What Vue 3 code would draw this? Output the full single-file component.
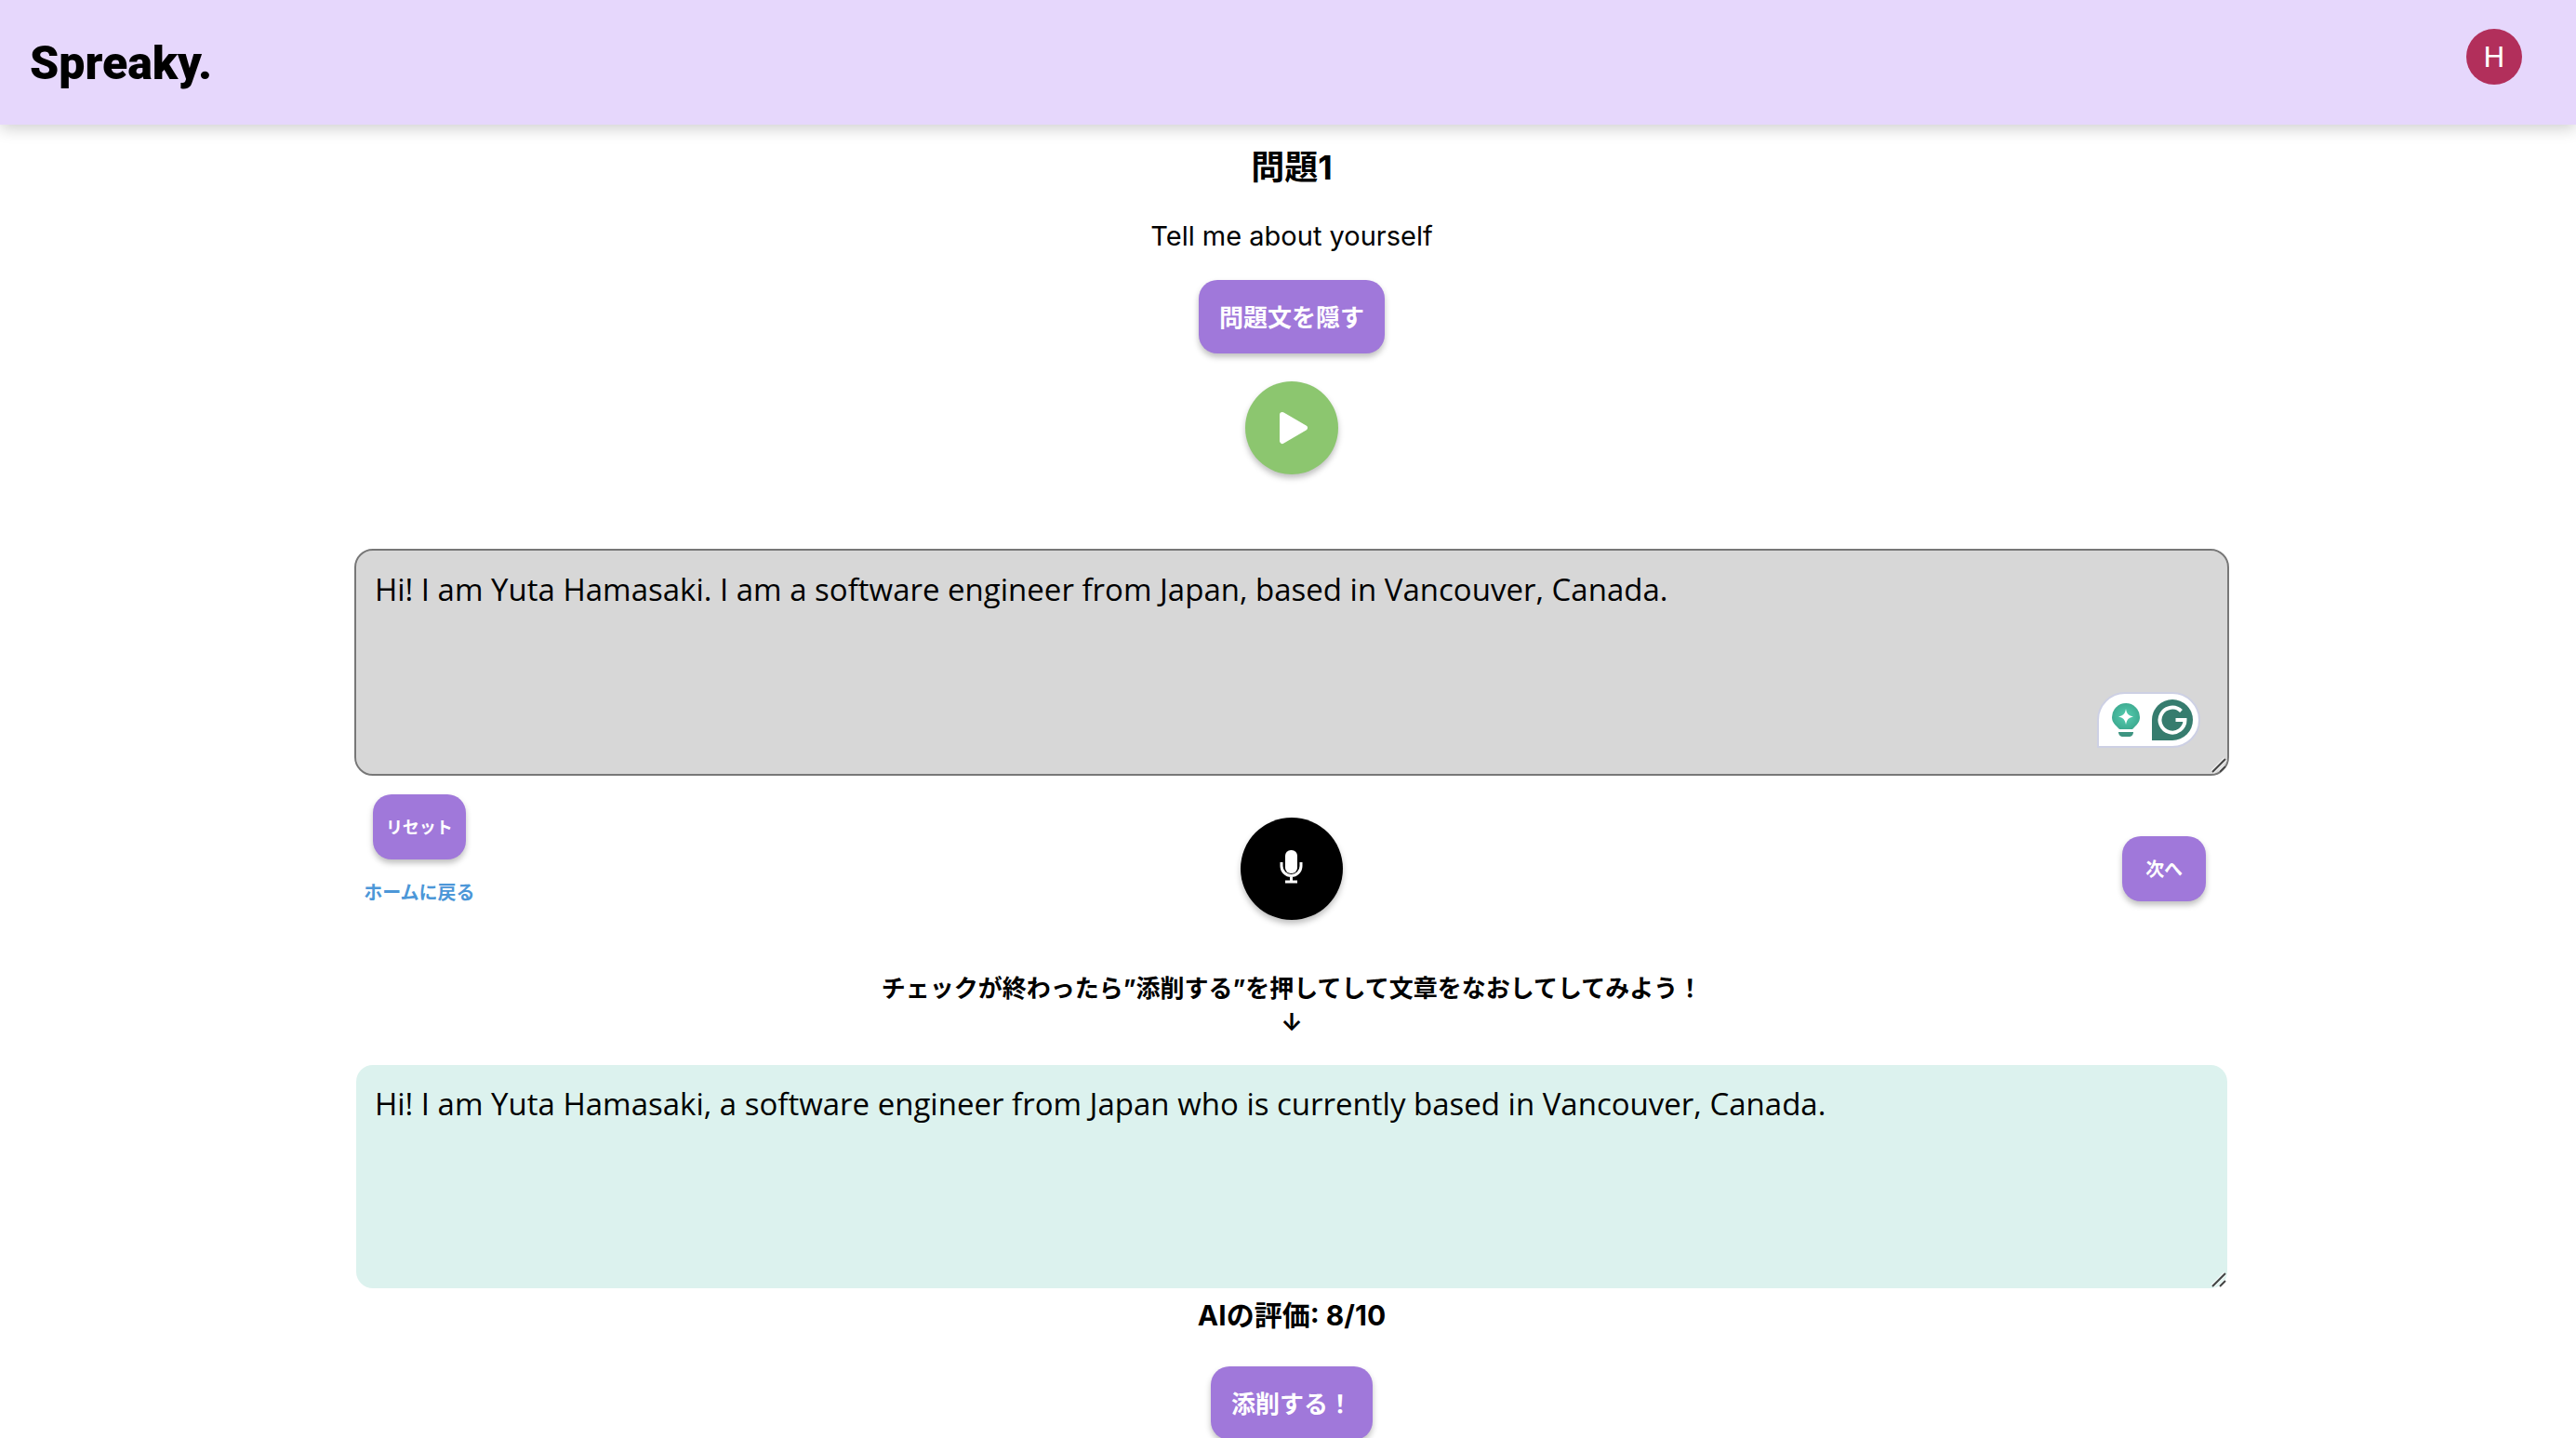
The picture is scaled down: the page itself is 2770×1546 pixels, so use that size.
<script setup>
import { ref } from 'vue'

const questionVisible = ref(true)
const answer = ref('Hi! I am Yuta Hamasaki. I am a software engineer from Japan, based in Vancouver, Canada.')
const corrected = ref('Hi! I am Yuta Hamasaki, a software engineer from Japan who is currently based in Vancouver, Canada.')

function reset() {
  answer.value = ''
}
</script>

<template>
  <div class="page">
    <header class="header">
      <a class="logo" href="#">Spreaky.</a>
      <button class="avatar" type="button">H</button>
    </header>

    <main class="main">
      <h1 class="title">問題1</h1>
      <p v-if="questionVisible" class="question">Tell me about yourself</p>
      <button class="btn" type="button" @click="questionVisible = !questionVisible">問題文を隠す</button>
      <button class="round play" type="button" aria-label="再生">
        <svg width="36" height="36" viewBox="0 0 36 36">
          <path d="M8 4L32 18L8 32Z" fill="#fff" stroke="#fff" stroke-width="6" stroke-linejoin="round" />
        </svg>
      </button>

      <div class="field">
        <textarea v-model="answer" class="area answer" aria-label="回答" spellcheck="false"></textarea>
        <div class="assistant">
          <svg width="32" height="38" viewBox="0 0 32 38">
            <defs>
              <radialGradient id="bulb">
                <stop offset="0" stop-color="#56cdb0" />
                <stop offset="1" stop-color="#3fac92" />
              </radialGradient>
            </defs>
            <path d="M16 1a15 15 0 0 1 15 15c0 5-3 8-6 11l-2 2H9l-2-2c-3-3-6-6-6-11A15 15 0 0 1 16 1z" fill="url(#bulb)" />
            <path d="M8 32h16c0 3-2 5-5 5h-6c-3 0-5-2-5-5z" fill="#3d9481" />
            <path d="M16 7c1 6 3 7 8 8.500c-5 1-7 3-8 8.500c-1-5.500-3-7.500-8-8.500c5-1.500 7-2.500 8-8.500z" fill="#fff" />
          </svg>
          <svg width="44" height="44" viewBox="0 0 44 44">
            <path d="M0 44V22a22 22 0 1 1 22 22z" fill="#367c6e" />
            <path d="M31.500 12.500A13.500 13.500 0 1 0 35.500 22H25.500M35.500 22" fill="none" stroke="#fff" stroke-width="4" />
          </svg>
        </div>
        <svg class="grip" width="18" height="18" viewBox="0 0 18 18">
          <path d="M2 16L16 2M10 16L16 10" stroke="#fff" stroke-width="5" opacity=".5" />
          <path d="M2 16L16 2M10 16L16 10" stroke="#444" stroke-width="2" />
        </svg>
      </div>

      <div class="controls">
        <div class="side start">
          <button class="btn small reset" type="button" @click="reset">リセット</button>
          <a class="home" href="#">ホームに戻る</a>
        </div>
        <button class="round mic" type="button" aria-label="録音">
          <svg width="26" height="40" viewBox="0 0 26 40">
            <rect x="6" y="0" width="13" height="25" rx="6" fill="#fff" />
            <path d="M2 13v4a10.500 10.500 0 0 0 21 0v-4M12.500 28v6M6 34h13" fill="none" stroke="#fff" stroke-width="3" />
          </svg>
        </button>
        <div class="side">
          <button class="btn small next" type="button">次へ</button>
        </div>
      </div>

      <p class="hint">チェックが終わったら”添削する”を押してして文章をなおしてしてみよう！<br>↓</p>

      <div class="field">
        <textarea v-model="corrected" class="area corrected" aria-label="添削結果" spellcheck="false"></textarea>
        <svg class="grip" width="18" height="18" viewBox="0 0 18 18">
          <path d="M2 16L16 2M10 16L16 10" stroke="#fff" stroke-width="5" opacity=".5" />
          <path d="M2 16L16 2M10 16L16 10" stroke="#444" stroke-width="2" />
        </svg>
      </div>

      <p class="score">AIの評価: 8/10</p>
      <button class="btn" type="button">添削する！</button>
    </main>
  </div>
</template>

<style>
body {
  margin: 0;
  background: #fff;
}
</style>

<style scoped>
.page {
  height: 100vh;
  overflow: hidden;
  color: #000;
  font-family: Inter, "Noto Sans CJK JP", sans-serif;
}
.page * {
  box-sizing: border-box;
}
.header {
  display: flex;
  justify-content: space-between;
  align-items: flex-start;
  height: 134px;
  padding: 31px 58px 0 32px;
  background: #e6d7fc;
  box-shadow: 0 4px 16px rgba(0, 0, 0, 0.2);
}
.logo {
  margin-top: 9px;
  color: #000;
  font: 900 50px/56px Roboto, sans-serif;
  text-decoration: none;
}
.avatar {
  width: 60px;
  height: 60px;
  padding: 0;
  border: 0;
  border-radius: 50%;
  background: #b22f5b;
  color: #fff;
  font: 400 32px/60px Roboto, sans-serif;
}
.main {
  display: flex;
  flex-direction: column;
  align-items: center;
  padding: 20px 0 0 8px;
}
.title {
  margin: 0;
  font-size: 36px;
  line-height: 52px;
}
.question {
  margin: 28px 0 27px;
  font-size: 29px;
  line-height: 40px;
}
.btn {
  height: 79px;
  padding: 0 22px 2px;
  border: 0;
  border-radius: 20px;
  background: #a078da;
  box-shadow: 0 4px 6px rgba(0, 0, 0, 0.25);
  color: #fff;
  font-family: inherit;
  font-size: 26px;
  font-weight: 700;
}
.small {
  height: 70px;
  padding: 0 0 2px;
}
.reset {
  width: 100px;
  font-size: 18px;
}
.next {
  width: 90px;
  font-size: 20px;
}
.round {
  display: flex;
  align-items: center;
  justify-content: center;
  padding: 0;
  border: 0;
  border-radius: 50%;
  box-shadow: 0 4px 6px rgba(0, 0, 0, 0.25);
}
.play {
  width: 100px;
  height: 100px;
  margin: 30px 0 80px;
  background: #8cc66f;
}
.mic {
  width: 110px;
  height: 110px;
  background: #000;
}
.field {
  position: relative;
  display: flex;
  width: 73%;
}
.area {
  width: 100%;
  padding: 20px;
  border: 2px solid transparent;
  border-radius: 20px;
  outline: 0;
  resize: none;
  background-clip: padding-box;
  color: #000;
  font: 400 33px/44px "Open Sans", sans-serif;
}
.answer {
  height: 244px;
  border-color: #777;
  background-color: #d7d7d7;
}
.corrected {
  height: 244px;
  background-color: #dcf2ee;
}
.grip {
  position: absolute;
  right: 2px;
  bottom: 2px;
}
.assistant {
  position: absolute;
  right: 31px;
  bottom: 30px;
  display: flex;
  align-items: center;
  gap: 12px;
  height: 60px;
  padding: 0 6px 0 13px;
  border: 2px solid #cdd0e4;
  border-radius: 30px 30px 30px 0;
  background: #fff;
}
.controls {
  display: flex;
  align-items: center;
  justify-content: space-between;
  width: 73%;
  height: 160px;
  margin-top: 20px;
}
.side {
  display: flex;
  flex-direction: column;
  align-items: center;
  width: 140px;
}
.start {
  align-self: flex-start;
}
.home {
  margin-top: 21px;
  color: #4c97d8;
  font-size: 20px;
  font-weight: 700;
  line-height: 30px;
  text-decoration: none;
}
.hint {
  margin: 31px 0 26px;
  font-size: 26px;
  font-weight: 700;
  line-height: 36px;
  text-align: center;
}
.score {
  margin: 7px 0 35px;
  font-size: 30px;
  font-weight: 700;
  line-height: 40px;
}
</style>
